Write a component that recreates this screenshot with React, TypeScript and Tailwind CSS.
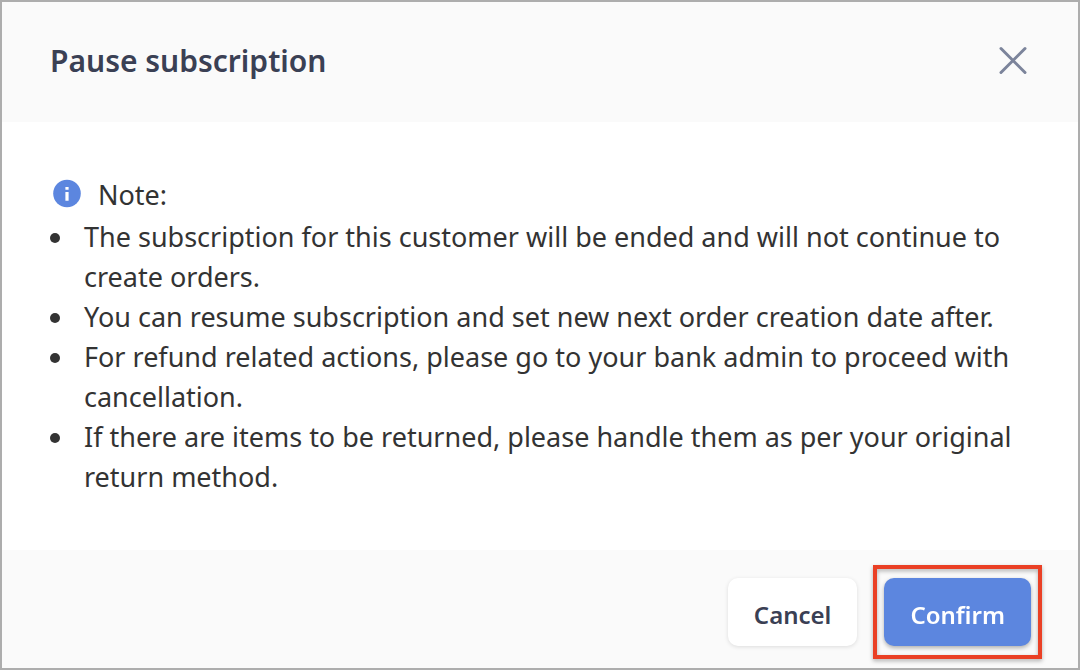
const notes = [
  "The subscription for this customer will be ended and will not continue to create orders.",
  "You can resume subscription and set new next order creation date after.",
  "For refund related actions, please go to your bank admin to proceed with cancellation.",
  "If there are items to be returned, please handle them as per your original return method.",
];

export default function App() {
  return (
    <div
      role="dialog"
      aria-labelledby="dialog-title"
      className="flex flex-col min-h-screen border-2 border-[#adadad] bg-white font-['Noto_Sans','Open_Sans',sans-serif]"
    >
      {/* Header */}
      <header className="flex items-center justify-between bg-[#fafafa] px-12 pt-[37px] pb-[39px]">
        <h1 id="dialog-title" className="text-[30px] leading-11 font-semibold text-[#3a4054]">
          Pause subscription
        </h1>
        <button type="button" aria-label="Close" className="text-[#7c849b]">
          <svg width="34" height="34" fill="none" viewBox="0 0 34 34" stroke="currentColor" strokeWidth={3}>
            <path strokeLinecap="round" d="M5 4.5l24 24M29 4.5L5 28.5" />
          </svg>
        </button>
      </header>

      {/* Body */}
      <main className="flex-1 px-12 pt-[53px] pb-12 text-[27px] leading-10 text-[#333]">
        <div className="flex items-center gap-3.5 mb-0.5">
          <svg width="34" height="34" viewBox="0 0 34 34">
            <circle cx="17" cy="15.5" r="13.8" fill="#5c86df" />
            <path fill="#fff" d="M15.4 9h3.2v2.8h-3.2zM15.4 14.1h3.2v8.6h-3.2z" />
          </svg>
          <p>Note:</p>
        </div>
        <ul className="list-disc pl-[26px]">
          {notes.map((note) => (
            <li key={note} className="pl-2">
              {note}
            </li>
          ))}
        </ul>
      </main>

      {/* Footer */}
      <footer className="flex items-center justify-end gap-4 bg-[#fafafa] pt-[15px] pb-[9px] pr-9">
        <button
          type="button"
          className="h-[68px] px-[26px] pt-1.5 rounded-[10px] bg-white text-2xl font-semibold text-[#3a4054] shadow-[0_1px_4px_rgba(0,0,0,0.12)]"
        >
          Cancel
        </button>
        <div className="border-4 border-[#ea4025] px-[7px] py-[9px] drop-shadow-[0_2px_2px_rgba(0,0,0,0.3)]">
          <button
            type="button"
            className="h-[68px] px-[26px] pt-1.5 rounded-[10px] bg-[#5c86df] text-2xl font-semibold text-white block"
          >
            Confirm
          </button>
        </div>
      </footer>
    </div>
  );
}
